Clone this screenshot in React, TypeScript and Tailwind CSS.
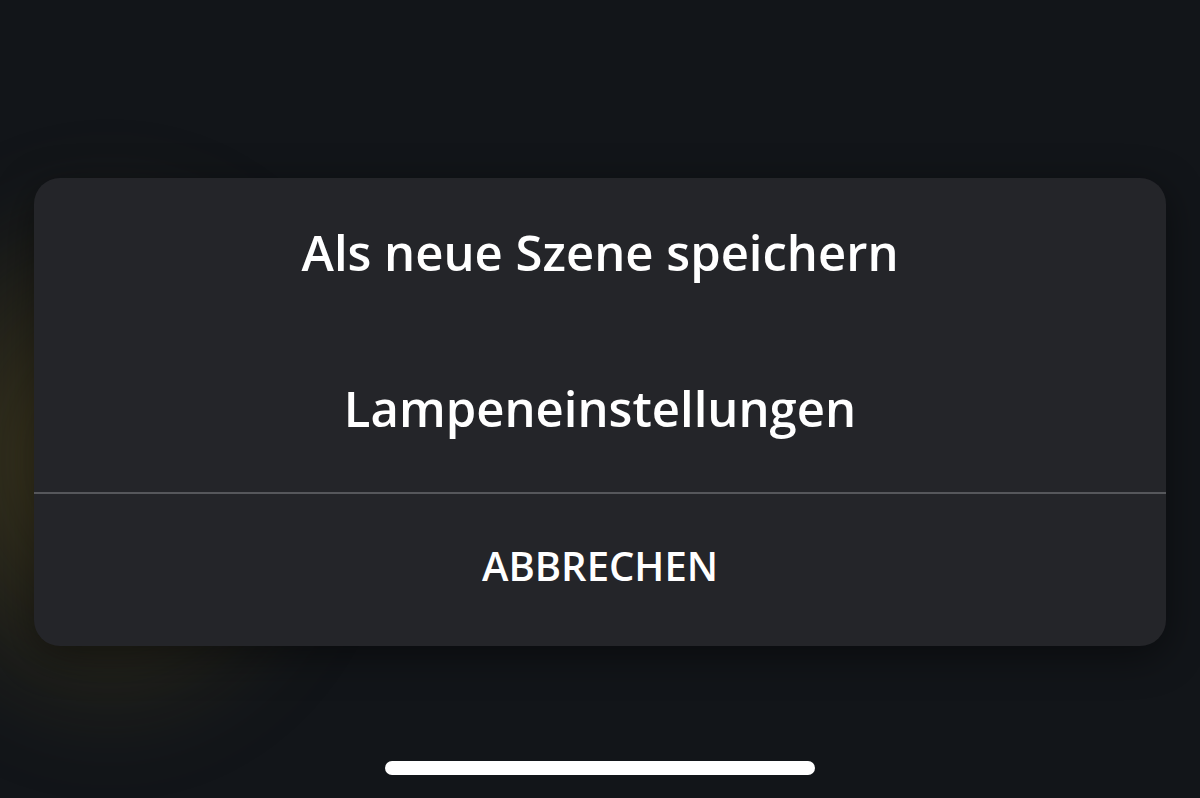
export default function App() {
  return (
    <div className="relative h-[798px] w-[1200px] overflow-hidden bg-[#121519] font-['Open_Sans',sans-serif]">
      {/* yellow glow behind the sheet */}
      <div className="pointer-events-none absolute left-[-140px] top-[160px] h-[600px] w-[500px] rounded-full bg-[radial-gradient(ellipse_at_center,rgba(115,98,35,0.55),rgba(18,21,25,0)_68%)] blur-2xl" />
      <div className="relative flex h-full flex-col items-center">
        <div className="mt-[178px] w-[1132px] overflow-hidden rounded-[26px] bg-[#242529] shadow-[0_10px_40px_rgba(0,0,0,0.45)]">
          <div className="flex h-[155px] items-center justify-center pb-[6px]">
            <span className="text-[49px] font-semibold leading-none text-white">Als neue Szene speichern</span>
          </div>
          <div className="flex h-[159px] items-center justify-center pb-[8px]">
            <span className="text-[49px] font-semibold leading-none text-white">Lampeneinstellungen</span>
          </div>
          <div className="h-[2px] bg-[#56575b]" />
          <div className="flex h-[152px] items-center justify-center pb-[8px]">
            <span className="text-[40px] font-semibold leading-none text-white">ABBRECHEN</span>
          </div>
        </div>
        <div className="mt-[115px] h-[14px] w-[430px] rounded-full bg-white" />
      </div>
    </div>
  );
}
